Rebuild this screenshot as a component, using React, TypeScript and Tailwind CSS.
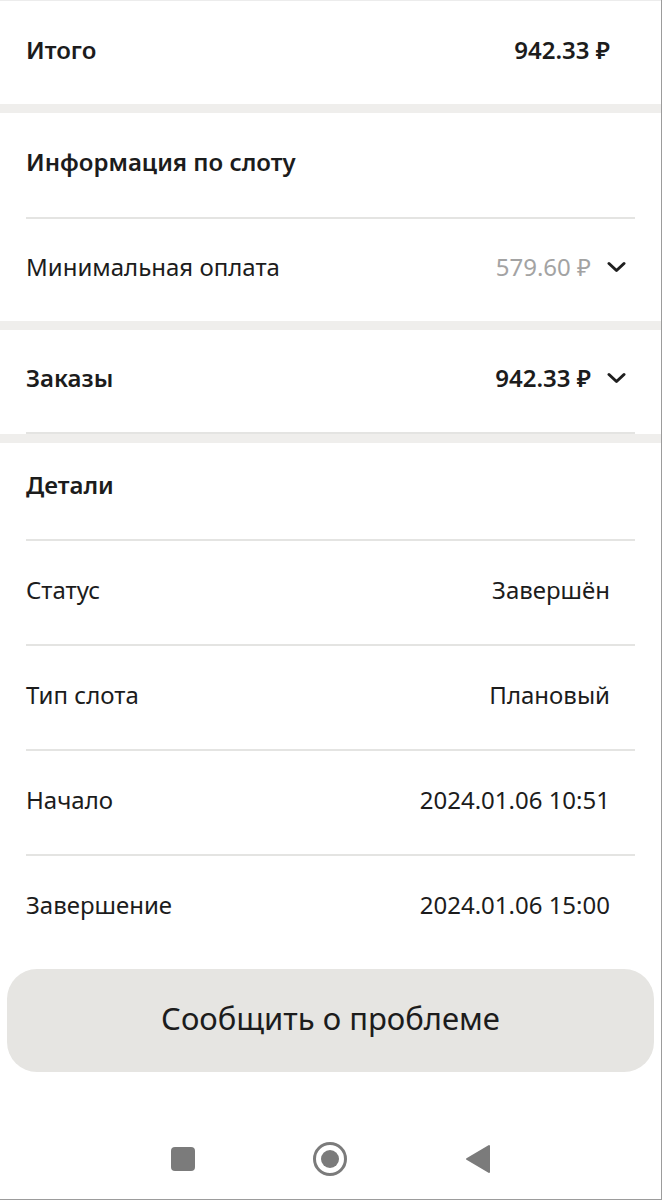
import React from "react";

/* ================= DATA ================= */

const details = [
  { label: "Статус", value: "Завершён" },
  { label: "Тип слота", value: "Плановый" },
  { label: "Начало", value: "2024.01.06 10:51" },
  { label: "Завершение", value: "2024.01.06 15:00" },
];

/* ================= PIECES ================= */

const Chevron = () => (
  <svg width="19" height="12" viewBox="0 0 19 12" fill="none" className="shrink-0">
    <path d="M2 2.5 L9.5 9.5 L17 2.5" stroke="#1f1f1f" strokeWidth="3" strokeLinecap="round" strokeLinejoin="round" />
  </svg>
);

const Band = () => <div className="h-[9px] bg-[#efeeec]" />;

const Divider = () => <div className="h-[2px] bg-[#e4e4e2]" />;

/* ================= MAIN ================= */

export default function App() {
  return (
    <div
      className="w-[662px] h-[1200px] bg-white border-r border-b border-[#9c9c9c] flex flex-col text-[#1c1c1c] text-[24px]"
      style={{ fontFamily: '"Noto Sans", "DejaVu Sans", sans-serif' }}
    >
      {/* TOTAL */}
      <div className="h-[104px] px-[26px] pb-[6px] flex items-center justify-between font-semibold border-t border-[#ececec]">
        <span>Итого</span>
        <span className="pr-[25px]">942.33 ₽</span>
      </div>
      <Band />

      {/* SLOT INFO */}
      <div className="px-[26px]">
        <div className="h-[104px] pb-[6px] flex items-center font-semibold">Информация по слоту</div>
        <Divider />
        <div className="h-[102px] pb-[6px] flex items-center justify-between">
          <span>Минимальная оплата</span>
          <div className="flex items-center gap-[16px] pr-[9px]">
            <span className="text-[#a3a3a3]">579.60 ₽</span>
            <Chevron />
          </div>
        </div>
      </div>
      <Band />

      {/* ORDERS */}
      <div className="px-[26px]">
        <div className="h-[102px] pb-[6px] flex items-center justify-between font-semibold">
          <span>Заказы</span>
          <div className="flex items-center gap-[16px] pr-[9px]">
            <span>942.33 ₽</span>
            <Chevron />
          </div>
        </div>
        <Divider />
      </div>
      <Band />

      {/* DETAILS */}
      <div className="px-[26px]">
        <div className="h-[96px] pb-[12px] flex items-center font-semibold">Детали</div>
        {details.map((d, i) => (
          <div key={d.label}>
            <Divider />
            <div className={`${i === details.length - 1 ? "h-[104px]" : "h-[103px]"} pb-[6px] flex items-center justify-between`}>
              <span>{d.label}</span>
              <span className="pr-[25px]">{d.value}</span>
            </div>
          </div>
        ))}
      </div>

      {/* BUTTON */}
      <div className="px-[7px] pt-[9px]">
        <button className="w-full h-[103px] pb-[4px] rounded-[30px] bg-[#e6e5e2] text-[31px] text-[#1c1c1c]">
          Сообщить о проблеме
        </button>
      </div>

      {/* NAV BAR */}
      <div className="flex-1 flex items-center justify-center gap-[117px] pt-[46px]">
        <div className="w-[24px] h-[24px] rounded-[4px] bg-[#7b7b7b]" />
        <svg width="36" height="36" viewBox="0 0 36 36">
          <circle cx="18" cy="18" r="15.5" fill="none" stroke="#7b7b7b" strokeWidth="3" />
          <circle cx="18" cy="18" r="9" fill="#7b7b7b" />
        </svg>
        <svg width="26" height="30" viewBox="0 0 26 30">
          <path d="M24 2 L24 28 L2 15 Z" fill="#7b7b7b" stroke="#7b7b7b" strokeWidth="2" strokeLinejoin="round" />
        </svg>
      </div>
    </div>
  );
}
